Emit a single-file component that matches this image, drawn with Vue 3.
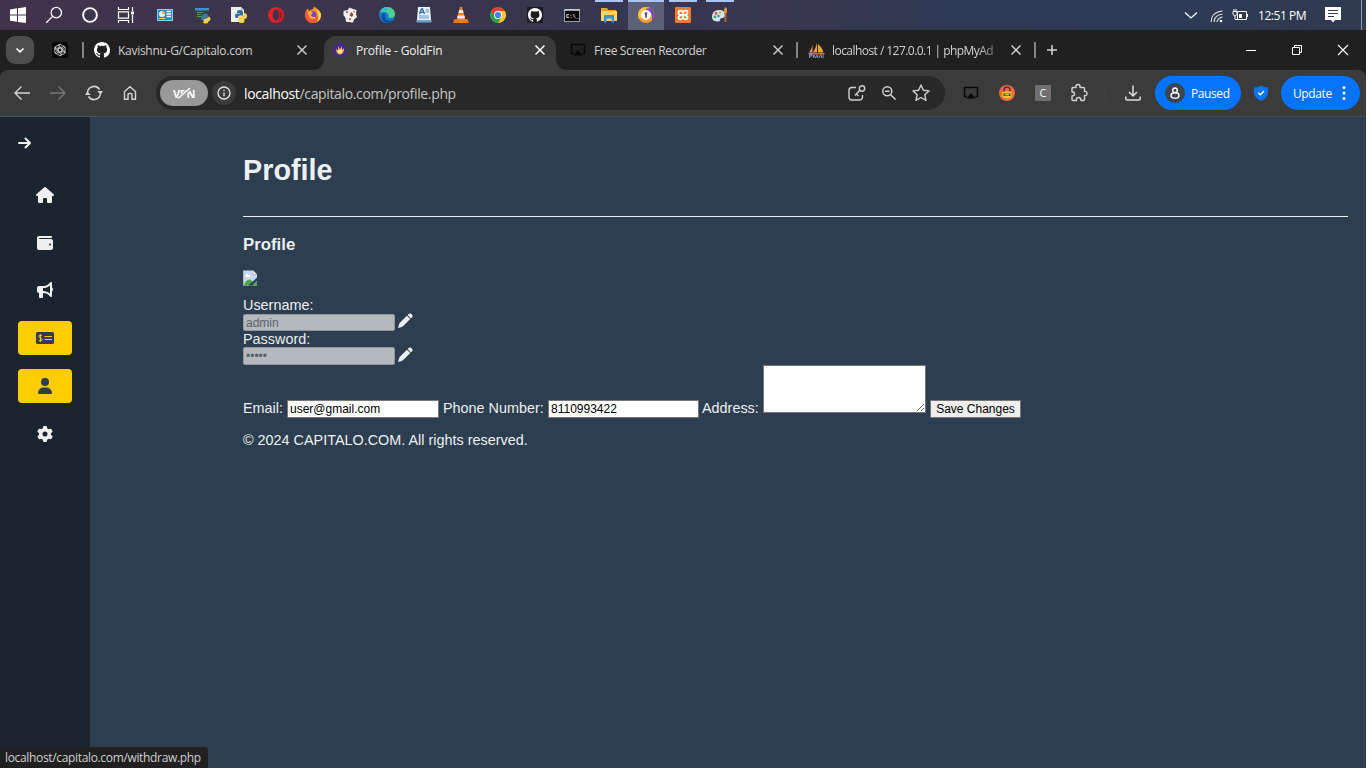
<script setup>
import { ref } from 'vue'

const email = ref('user@gmail.com')
const phone = ref('8110993422')
const username = ref('admin')
const password = ref('•••••')
const address = ref('')

const octocat = 'M8 0C3.58 0 0 3.58 0 8c0 3.54 2.29 6.53 5.47 7.59.4.07.55-.17.55-.38 0-.19-.01-.82-.01-1.49-2.01.37-2.53-.49-2.69-.94-.09-.23-.48-.94-.82-1.13-.28-.15-.68-.52-.01-.53.63-.01 1.08.58 1.23.82.72 1.21 1.87.87 2.33.66.07-.52.28-.87.51-1.07-1.78-.2-3.64-.89-3.64-3.95 0-.87.31-1.59.82-2.15-.08-.2-.36-1.02.08-2.12 0 0 .67-.21 2.2.82.64-.18 1.32-.27 2-.27s1.36.09 2 .27c1.53-1.04 2.2-.82 2.2-.82.44 1.1.16 1.92.08 2.12.51.56.82 1.27.82 2.15 0 3.07-1.87 3.75-3.65 3.95.29.25.54.73.54 1.48 0 1.07-.01 1.93-.01 2.2 0 .21.15.46.55.38A8.01 8.01 0 0 0 16 8c0-4.42-3.58-8-8-8z'

const nav = [
  { name: 'home', box: '0 0 576 512', w: 18, d: 'M575.8 255.5c0 18-15 32.1-32 32.1h-32l.7 160.2c0 2.7-.2 5.4-.5 8.1V472c0 22.1-17.9 40-40 40H456c-1.1 0-2.2 0-3.3-.1c-1.4 .1-2.8 .1-4.2 .1H416 392c-22.1 0-40-17.9-40-40V448 384c0-17.7-14.3-32-32-32H256c-17.7 0-32 14.3-32 32v64 24c0 22.1-17.9 40-40 40H160 128.1c-1.5 0-3-.1-4.5-.2c-1.2 .1-2.4 .2-3.6 .2H104c-22.1 0-40-17.9-40-40V360c0-.9 0-1.9 .1-2.8V287.6H32c-18 0-32-14-32-32.1c0-9 3-17 10-24L266.4 8c7-7 15-8 22-8s15 2 21 7L564.8 231.5c8 7 12 15 11 24z' },
  { name: 'wallet', box: '0 0 512 512', w: 16, d: 'M64 32C28.7 32 0 60.7 0 96V416c0 35.3 28.7 64 64 64H448c35.3 0 64-28.7 64-64V192c0-35.3-28.7-64-64-64H80c-8.8 0-16-7.2-16-16s7.2-16 16-16H448c17.7 0 32-14.3 32-32s-14.3-32-32-32H64zM416 272a32 32 0 1 1 0 64 32 32 0 1 1 0-64z' },
  { name: 'bullhorn', box: '0 0 512 512', w: 16, d: 'M480 32c0-12.9-7.8-24.6-19.8-29.6s-25.7-2.2-34.9 6.9L381.7 53c-48 48-113.1 75-181 75H192 160 64c-35.3 0-64 28.7-64 64v96c0 35.3 28.7 64 64 64l0 128c0 17.7 14.3 32 32 32h64c17.7 0 32-14.3 32-32V352l8.7 0c67.9 0 133 27 181 75l43.6 43.6c9.2 9.2 22.9 11.9 34.9 6.9s19.8-16.6 19.8-29.6V300.4c18.6-8.8 32-32.5 32-60.4s-13.4-51.6-32-60.4V32zm-64 76.7V240 371.3C357.2 317.8 280.5 288 200.7 288H192V192h8.7c79.8 0 156.5-29.8 215.3-83.3z' },
  { name: 'money-check', active: true },
  { name: 'user', active: true, box: '0 0 448 512', w: 14, d: 'M224 256A128 128 0 1 0 224 0a128 128 0 1 0 0 256zm-45.7 48C79.8 304 0 383.8 0 482.3C0 498.7 13.3 512 29.7 512H418.3c16.4 0 29.7-13.3 29.7-29.7C448 383.8 368.2 304 269.7 304H178.3z' },
  { name: 'gear', box: '0 0 512 512', w: 16, d: 'M495.9 166.6c3.2 8.7 .5 18.4-6.4 24.6l-43.3 39.4c1.1 8.3 1.7 16.8 1.7 25.4s-.6 17.1-1.7 25.4l43.3 39.4c6.9 6.2 9.6 15.9 6.4 24.6c-4.4 11.9-9.7 23.3-15.8 34.3l-4.7 8.1c-6.6 11-14 21.4-22.1 31.2c-5.9 7.2-15.7 9.6-24.5 6.8l-55.7-17.7c-13.4 10.3-28.2 18.9-44 25.4l-12.5 57.1c-2 9.1-9 16.3-18.2 17.8c-13.8 2.3-28 3.5-42.5 3.5s-28.7-1.2-42.5-3.5c-9.2-1.5-16.2-8.7-18.2-17.8l-12.5-57.1c-15.8-6.5-30.6-15.1-44-25.4L83.1 425.9c-8.8 2.8-18.6 .3-24.5-6.8c-8.1-9.8-15.5-20.2-22.1-31.2l-4.7-8.1c-6.1-11-11.4-22.4-15.8-34.3c-3.2-8.7-.5-18.4 6.4-24.6l43.3-39.4C64.6 273.1 64 264.6 64 256s.6-17.1 1.7-25.4L22.4 191.2c-6.9-6.2-9.6-15.9-6.4-24.6c4.4-11.9 9.7-23.3 15.8-34.3l4.7-8.1c6.6-11 14-21.4 22.1-31.2c5.9-7.2 15.7-9.6 24.5-6.8l55.7 17.7c13.4-10.3 28.2-18.9 44-25.4l12.5-57.1c2-9.1 9-16.3 18.2-17.8C227.3 1.2 241.5 0 256 0s28.7 1.2 42.5 3.5c9.2 1.5 16.2 8.7 18.2 17.8l12.5 57.1c15.8 6.5 30.6 15.1 44 25.4l55.7-17.7c8.8-2.8 18.6-.3 24.5 6.8c8.1 9.8 15.5 20.2 22.1 31.2l4.7 8.1c6.1 11 11.4 22.4 15.8 34.3zM256 336a80 80 0 1 0 0-160 80 80 0 1 0 0 160z' },
]
</script>

<template>
  <div class="screen">
    <header class="taskbar">
      <div class="sys-icons">
        <span class="slot">
          <svg width="18" height="18" viewBox="0 0 18 18" fill="#fff"><path d="M1 3.4 8 2.3V8.5H1zM9 2.2 17 1V8.5H9zM1 9.5H8V15.8L1 14.7zM9 9.5H17V17L9 15.9z" /></svg>
        </span>
        <span class="slot">
          <svg width="18" height="18" viewBox="0 0 18 18" fill="none" stroke="#fff" stroke-width="1.3"><circle cx="11.3" cy="6.6" r="5.2" /><path d="M7.6 10.4 1.2 16.7" /></svg>
        </span>
        <span class="slot">
          <svg width="18" height="18" viewBox="0 0 18 18" fill="none" stroke="#fff" stroke-width="1.9"><circle cx="9" cy="9" r="6.9" /></svg>
        </span>
        <span class="slot">
          <svg width="18" height="18" viewBox="0 0 18 18" fill="none" stroke="#fff" stroke-width="1.2"><path d="M1.5 1V3.5H11.5V1M1.5 17V14.5H11.5V17M1.5 5.8H11.5V12.2H1.5zM15.5 1V5M15.5 9V17" /><path d="M14 5.5H17V8.5H14z" fill="#fff" stroke="none" /></svg>
        </span>
      </div>
      <div class="apps">
        <span class="app">
          <svg width="18" height="18" viewBox="0 0 18 18"><rect x="1" y="3" width="16" height="12" fill="#7fd0f6" /><rect x="2" y="4" width="14" height="10" fill="#2b86c9" /><circle cx="6" cy="8" r="3" fill="#e8f4fc" /><path d="M6 8V5a3 3 0 0 1 3 3z" fill="#f3b23c" /><path d="M10.500 5.500H15M10.500 8H15M10.500 10.500H15" stroke="#fff" stroke-width="1.4" /><path d="M3 12.500H9" stroke="#f5d27a" /></svg>
        </span>
        <span class="app">
          <svg width="18" height="18" viewBox="0 0 18 18"><rect x="2" y="2" width="14" height="12" fill="#33413f" /><rect x="2" y="2" width="14" height="2.500" fill="#3b93d0" /><path d="M4 6.500H10M4 8.500H8M4 10.500H9" stroke="#4c9a55" /><path d="M9 10Q9 7.500 12 7.500T15 10V12H12Q10 12 10 14.500 8 14 8 12T10 10.500z" fill="#397aaf" /><path d="M15.500 10.500Q17.500 10.500 17.500 13T15.500 15V16Q15 17.500 12.500 17.500T10.500 16V13.500Q11 12.500 13 12.500 15.500 12.500 15.500 10.500z" fill="#f4cf4a" /></svg>
        </span>
        <span class="app">
          <svg width="18" height="18" viewBox="0 0 18 18"><path d="M1 1H11L14 4V16H1z" fill="#eceff2" /><path d="M11 1V4H14z" fill="#b7bcc4" /><path d="M7 6Q7 4 10 4T13 6V9.500H9.500Q8 9.500 8 12H6.500Q5 12 5 9.500T7.500 7.500H10V7H7z" fill="#366c9c" /><path d="M14 7Q17 7 17 10T14.500 13H11.500V13.500H14.500V15Q14.500 17 11.500 17T8.500 15V12.500Q8.500 10.500 10.500 10.500 14 10.500 14 7z" fill="#f8d044" /></svg>
        </span>
        <span class="app">
          <svg width="18" height="18" viewBox="0 0 18 18"><path fill-rule="evenodd" d="M9 1a8 8 0 1 0 0 16A8 8 0 0 0 9 1zm0 2.500c2 0 3.200 2.200 3.200 5.500S11 14.500 9 14.500 5.800 12.300 5.800 9 7 3.500 9 3.500z" fill="#e3202c" /><path d="M11 2.500a7 7 0 0 1 0 13C13.500 13 13.500 5 11 2.500z" fill="#b5101f" /></svg>
        </span>
        <span class="app">
          <svg width="18" height="18" viewBox="0 0 18 18"><path d="M9 17a8 8 0 0 1-8-8Q1 5 3.500 2.500L5 5Q7 3 9 3.200 9 1.500 11 .6q1 2.400 3.500 3.800Q17 6.500 17 9a8 8 0 0 1-8 8z" fill="#ff9125" /><path d="M9 17a8 8 0 0 1-8-8Q1 6 2.500 4 4 9 8 10q5 1.500 9-1a8 8 0 0 1-8 8z" fill="#f65a3f" /><path d="M12 2Q17 5.500 17 9A8 8 0 0 1 13 16Q16 10 12 2z" fill="#ffd43c" /><circle cx="9" cy="8.800" r="3.600" fill="#7645c9" /><path d="M4 6q3-1 5 1-2 .7-2 2.500 2 2.500 5 1-1 3-4 2.500Q4.500 12 4 6z" fill="#ffad3c" /></svg>
        </span>
        <span class="app">
          <svg width="18" height="18" viewBox="0 0 18 18"><path d="m2.500 5 4-1 2-2.500L12 3l3.500 1-.5 4 1 3-3 2.500-1 3-7-.7-.5-3.800-2-3z" fill="#f2f1ee" /><path d="m10.500 6-2 3.200L11 11l1.400-2.500z" fill="#8b3c42" /><circle cx="6" cy="6" r="1" fill="#c93a3a" /><circle cx="9" cy="13" r="1" fill="#c93a3a" /><circle cx="13" cy="5.800" r=".8" fill="#c93a3a" /></svg>
        </span>
        <span class="app">
          <svg width="18" height="18" viewBox="0 0 18 18"><circle cx="9" cy="9" r="8" fill="#1479cf" /><path d="M1.500 7C3 2.500 6 1 9 1c5 0 8 3.500 8 7 0 3-2.500 4-4.500 4S10 11.200 10.500 10q0-3.500-3.500-4-4-.5-5.500 1z" fill="#4fd08e" /><path d="M1.500 7Q4 1.500 9 1l1 3Q5 3.500 1.500 7z" fill="#36b6dc" /><path d="M7.200 8q-1.500 4 2 6 3 1.500 6-.5-3 4.500-8 3Q2 14 4 9q1-2 3.200-1z" fill="#0c4f9e" /></svg>
        </span>
        <span class="app">
          <svg width="18" height="18" viewBox="0 0 18 18"><path d="M3 1H15L16 14H2z" fill="#edf5fb" /><path d="M1.500 14H16.500V16.500H1.500z" fill="#6fa6cf" /><path d="m4.500 8 2-5h1l2 5M5.300 6.400H8.700" fill="none" stroke="#1e68b7" stroke-width="1.300" /><path d="M10.500 4H14M10.500 6H14M4 10H14M4 12H14" stroke="#5a95c4" /></svg>
        </span>
        <span class="app">
          <svg width="18" height="18" viewBox="0 0 18 18"><path d="M2.500 13H15.500L17 17H1z" fill="#e9740d" /><path d="M8 1H10L13.500 14Q9 16.500 4.500 14z" fill="#f3811b" /><path d="M7.200 4H10.800L11.500 7H6.500zM5.700 9.500H12.300L13 12Q9 13.500 5 12z" fill="#f0eeeb" /></svg>
        </span>
        <span class="app">
          <svg width="18" height="18" viewBox="0 0 18 18"><path d="M2.070 5A8 8 0 0 1 15.930 5H9z" fill="#e8422f" /><path d="M2.070 5A8 8 0 0 0 9 17L12.500 11 9 9z" fill="#2fa04c" /><path d="M15.930 5A8 8 0 0 1 9 17L12.500 11Q13 7 9 5z" fill="#fccb1b" /><path d="M2.070 5 5.700 11 8 5z" fill="#e8422f" /><circle cx="9" cy="9" r="4" fill="#fff" /><circle cx="9" cy="9" r="3.100" fill="#3f83ee" /></svg>
        </span>
        <span class="app">
          <svg width="18" height="18" viewBox="0 0 18 18"><rect x="1" y="1" width="16" height="16" fill="#1b1b20" /><path :d="octocat" fill="#fff" transform="translate(2 2) scale(.875)" /></svg>
        </span>
        <span class="app">
          <svg width="18" height="18" viewBox="0 0 18 18"><rect x="1.500" y="3.500" width="15" height="12" fill="#050505" stroke="#9c9ca4" /><path d="M1.500 4H16.500" stroke="#d7d7da" stroke-width="1.500" /><text x="3" y="12" class="cmd">C:\_</text></svg>
        </span>
        <span class="app open">
          <svg width="18" height="18" viewBox="0 0 18 18"><path d="M1 2H7L8.500 4H16V7H1z" fill="#e3a72c" /><path d="M1 5H17V15H1z" fill="#fbd565" /><path d="M4 9H14V16.500H11.500V12.500H6.500V16.500H4z" fill="#3b92d5" /></svg>
        </span>
        <span class="app open current">
          <svg width="18" height="18" viewBox="0 0 18 18"><circle cx="9" cy="9" r="8" fill="#ff9b25" /><path d="M9 1a8 8 0 0 1 8 8q0 3-2 5Q16 5 9 4z" fill="#7643d8" /><path d="M1 9a8 8 0 0 1 8-8q3 0 4 1Q4 2 4.500 12L2 13z" fill="#ffc23b" /><circle cx="9" cy="9" r="5" fill="#fff" /><path d="M9 6a1.500 1.500 0 0 1 1 2.500L9.700 12H8.300L8 8.500A1.500 1.500 0 0 1 9 6z" fill="#68458b" /></svg>
        </span>
        <span class="app open">
          <svg width="18" height="18" viewBox="0 0 18 18"><rect x="1" y="1" width="16" height="16" rx="1" fill="#f47b28" /><path d="M9 9C7 9 4.500 8.800 4.500 6.500S8 4 9 6.500C10 4 13.500 4.200 13.500 6.500S11 9 9 9zM9 9C7 9 4.500 9.200 4.500 11.500S8 14 9 11.500C10 14 13.500 13.800 13.500 11.500S11 9 9 9z" fill="none" stroke="#fff" stroke-width="1.800" /></svg>
        </span>
        <span class="app open">
          <svg width="18" height="18" viewBox="0 0 18 18"><path d="M1 11Q1 4 8 4q6 0 6 5 0 3-3 3-2 0-2 2 0 1.500-2 1.500-6 0-6-4.500z" fill="#cfe6f4" /><circle cx="5" cy="7.500" r="1.400" fill="#e25345" /><circle cx="9" cy="6.500" r="1.300" fill="#f0b428" /><circle cx="4" cy="11" r="1.400" fill="#3eaa5d" /><circle cx="7.500" cy="10" r="1.200" fill="#3380cb" /><path d="M14.500 1 16 3V7H13V3z" fill="#e08f3c" /><path d="M14.500 7V16" stroke="#b5672b" stroke-width="1.800" /></svg>
        </span>
      </div>
      <div class="tray">
        <svg class="chev" width="14" height="14" viewBox="0 0 14 14" fill="none" stroke="#fff" stroke-width="1.200"><path d="m1 4.500 6 5.500 6-5.500" /></svg>
        <svg class="wifi" width="14" height="14" viewBox="0 0 14 14" fill="none" stroke="#e8e8ee" stroke-width="1.100"><path d="M1 13Q1.500 3 12.500 2M4 13Q4.500 6 12.500 5M7 13Q7.500 9 12.500 8" /><circle cx="11" cy="12" r="1.300" fill="#fff" stroke="none" /></svg>
        <svg class="battery" width="16" height="14" viewBox="0 0 16 14" fill="none" stroke="#fff"><path d="M5.500 3.500H14.500V11.500H5.500zM15.500 6V9M1 3.500H5V6.500L3 8 1 6.500zM2 1V3M4 1V3M3 8V11.500H6" /><path d="M7 6H10V10H7z" fill="#fff" stroke="none" /></svg>
        <span class="clock">12:51 PM</span>
        <svg class="notice" width="18" height="18" viewBox="0 0 18 18"><path d="M1 1H17V14H11L9 16.500 7 14H1z" fill="#fff" /><path d="M4 4.500H14M4 7.500H14M4 10.500H10" stroke="#303950" stroke-width="1.200" /></svg>
        <i class="peek"></i>
      </div>
    </header>

    <section class="tabs">
      <button class="tab-search"><svg width="12" height="12" viewBox="0 0 12 12" fill="none" stroke="#fff" stroke-width="1.700"><path d="m2.500 4.500 3.500 3.300 3.500-3.300" /></svg></button>
      <div class="pinned">
        <svg width="16" height="16" viewBox="0 0 16 16"><rect width="16" height="16" rx="2" fill="#090909" /><g fill="none" stroke="#ddd" stroke-width=".8"><path v-for="a in [0, 60, 120, 180, 240, 300]" :key="a" :transform="`rotate(${a} 8 8)`" d="M8 5.700 10 6.900V10.500L7.500 12M6 3.200Q8.500 1 10.700 4L13 5.500" /></g></svg>
      </div>
      <i class="bar"></i>
      <div class="tab tab-git">
        <svg class="fav" width="16" height="16" viewBox="0 0 16 16" fill="#fff"><path :d="octocat" /></svg>
        <span class="t1">Kavishnu-G/Capitalo.com</span>
        <svg class="close" width="12" height="12" viewBox="0 0 12 12" stroke="#d6d6d6" stroke-width="1.400"><path d="m1.500 1.500 9 9m0-9-9 9" /></svg>
      </div>
      <div class="tab tab-active">
        <svg class="fav" width="16" height="16" viewBox="0 0 16 16"><circle cx="8" cy="8" r="7" fill="#41298e" /><path d="M4 6Q5 9 6 8L6.500 4 8 7.500 10 4V8L12 6Q12 12 8 12.500 4 12 4 6z" fill="#ffb852" /><path d="M6 8h4v3H6z" fill="#ffe485" /></svg>
        <span class="t2">Profile - GoldFin</span>
        <svg class="close" width="12" height="12" viewBox="0 0 12 12" stroke="#fff" stroke-width="1.500"><path d="m1.500 1.500 9 9m0-9-9 9" /></svg>
      </div>
      <div class="tab tab-rec">
        <svg class="fav" width="16" height="14" viewBox="0 0 16 14"><path d="M4 10.500H1.500V1.500H14.500V10.500H12" fill="none" stroke="#070707" stroke-width="1.500" /><path d="m8 7 4.500 5.500h-9z" fill="#050505" /></svg>
        <span class="t3">Free Screen Recorder</span>
        <svg class="close" width="12" height="12" viewBox="0 0 12 12" stroke="#d6d6d6" stroke-width="1.400"><path d="m1.500 1.500 9 9m0-9-9 9" /></svg>
      </div>
      <i class="bar"></i>
      <div class="tab tab-pma">
        <svg class="fav" width="17" height="16" viewBox="0 0 17 16"><path d="M1 10.500Q4 7 4.500 2.500V10.500zM5 10.500Q8 6 9 .5V10.500zM10 10.500V2Q14 5 15.500 10.500z" fill="#f3a02f" /><path d="M0 11H17L16 12.500H1z" fill="#c7793b" /><path d="M1.500 16V12.500H4V14H2M5 16l1-3 1.500 3 1.500-3 1 3M11 16l1.500-3.500L14 16M15 12.500V16" fill="none" stroke="#9aa1d6" stroke-width=".9" /></svg>
        <span class="t4">localhost / 127.0.0.1 | phpMyAd</span>
        <svg class="close" width="12" height="12" viewBox="0 0 12 12" stroke="#d6d6d6" stroke-width="1.400"><path d="m1.500 1.500 9 9m0-9-9 9" /></svg>
      </div>
      <i class="bar"></i>
      <svg class="plus" width="12" height="12" viewBox="0 0 12 12" stroke="#d6d6d6" stroke-width="1.500"><path d="M6 1V11M1 6H11" /></svg>
      <div class="win">
        <svg width="12" height="12" viewBox="0 0 12 12" stroke="#fff"><path d="M1 6.500H11" /></svg>
        <svg width="12" height="12" viewBox="0 0 12 12" fill="none" stroke="#fff"><path d="M1.500 3.500H8.500V10.500H1.500zM3.500 3.500V1.500H10.500V8.500H8.500" /></svg>
        <svg width="12" height="12" viewBox="0 0 12 12" stroke="#fff" stroke-width="1.100"><path d="m1 1 10 10m0-10L1 11" /></svg>
      </div>
    </section>

    <section class="toolbar">
      <div class="navs">
        <svg width="18" height="18" viewBox="0 0 18 18" fill="none" stroke="#d4d4d4" stroke-width="1.400"><path d="M17 9H2M8.500 2.500 2 9l6.500 6.500" /></svg>
        <svg width="18" height="18" viewBox="0 0 18 18" fill="none" stroke="#777" stroke-width="1.400"><path d="M1 9H16M9.500 2.500 16 9l-6.500 6.500" /></svg>
        <svg width="18" height="18" viewBox="0 0 18 18" fill="none" stroke="#d4d4d4" stroke-width="1.500"><path d="M2.500 9A6.500 6.500 0 0 1 14.500 5.500M15.500 9A6.500 6.500 0 0 1 3.500 12.500" /><path d="M12.300 7H18L15.500 10.500zM5.700 11H0L2.500 7.500z" fill="#d4d4d4" stroke="none" /></svg>
        <svg width="18" height="18" viewBox="0 0 18 18" fill="none" stroke="#d4d4d4" stroke-width="1.400"><path d="M3.500 7.500 9 2.700l5.500 4.800V15.300H11V10.500Q11 9.500 10 9.500H8Q7 9.500 7 10.500V15.300H3.500z" /></svg>
      </div>
      <div class="omni">
        <span class="vpn">VPN<svg width="30" height="16" viewBox="0 0 30 16"><path d="M9.500 13.500 21.500 3" stroke="#999" stroke-width="3.200" /><path d="M9 13.500 21 3" stroke="#fff" stroke-width="1.500" /></svg></span>
        <span class="info"><svg width="14" height="14" viewBox="0 0 14 14" fill="none" stroke="#e6e6e6" stroke-width="1.300"><circle cx="7" cy="7" r="6" /><path d="M7 6.300V10.300M7 3.700V5" /></svg></span>
        <span class="url"><b>localhost</b>/capitalo.com/profile.php</span>
        <div class="omni-icons">
          <svg width="20" height="18" viewBox="0 0 20 18" fill="none" stroke="#d0d0d0" stroke-width="1.400"><path d="M9 3.500H5Q2 3.500 2 6.500V13Q2 16 5 16H12Q15.500 16 15.500 13V11" /><circle cx="15" cy="4.500" r="2.700" /><path d="M12.800 6.200 8 11.500M9.500 10l2 2" /></svg>
          <svg width="16" height="16" viewBox="0 0 16 16" fill="none" stroke="#d0d0d0" stroke-width="1.500"><circle cx="6.300" cy="6.300" r="4.500" /><path d="M4 6.300H8.600M9.700 9.700 14.500 14.500" /></svg>
          <svg width="20" height="20" viewBox="0 0 20 20" fill="none" stroke="#d0d0d0" stroke-width="1.400" stroke-linejoin="round"><path d="m10 2 2.400 5.300 5.600.6-4.200 3.800 1.200 5.600L10 14.500 5 17.300l1.200-5.600L2 7.900l5.600-.6z" /></svg>
        </div>
      </div>
      <div class="exts">
        <svg width="16" height="14" viewBox="0 0 16 14"><path d="M4 10.500H1.500V1.500H14.500V10.500H12" fill="none" stroke="#080808" stroke-width="1.500" /><path d="m8 7 4.500 5.500h-9z" fill="#050505" /></svg>
        <svg width="16" height="16" viewBox="0 0 16 16"><circle cx="8" cy="8" r="8" fill="#f4693e" /><path d="M5 7V5a3 3 0 0 1 6 0v2" fill="none" stroke="#5b3328" stroke-width="1.600" /><path d="M3.500 6.500H12.500V11Q12 13.500 8 13.500T3.500 11z" fill="#f3c434" /><path d="M4.500 8.500H11.500V11H4.500z" fill="#38566d" /><path d="M6 9.700H10" stroke="#f3c434" stroke-width="1.200" /></svg>
        <span class="c-ext">C</span>
        <svg width="20" height="20" viewBox="0 0 20 20" fill="none" stroke="#d4d4d4" stroke-width="1.400" stroke-linejoin="round"><path d="M3 5.500Q3 4.500 4 4.500H7Q6.500 1.500 9 1.500T11 4.500H14.500Q15.500 4.500 15.500 5.500V8.500Q18 8 18 10.500T15.500 12.500V16.500Q15.500 17.500 14.500 17.500H12Q12 14.500 9.500 14.500T7.500 17.500H4Q3 17.500 3 16.500V13Q5.500 13 5.500 11T3 8.800z" /></svg>
      </div>
      <i class="sep"></i>
      <svg class="dl" width="18" height="18" viewBox="0 0 18 18" fill="none" stroke="#e0e0e0" stroke-width="1.500"><path d="M9 1.500V12M5 8l4 4 4-4M1.800 12.500V14.500Q1.800 16 3.300 16H14.700Q16.200 16 16.200 14.500V12.500" /></svg>
      <div class="paused"><span class="who"><svg width="12" height="14" viewBox="0 0 12 14" fill="none" stroke="#fff" stroke-width="1.400"><circle cx="6" cy="4.300" r="2.300" /><ellipse cx="6" cy="9.400" rx="4" ry="2.700" /></svg></span>Paused</div>
      <svg class="shield" width="14" height="16" viewBox="0 0 14 16"><path d="M7 .5Q10 2.500 14 2.500V8Q13.500 13 7 16 .5 13 0 8V2.500Q4 2.500 7 .5z" fill="#0b74f7" /><path d="m4.300 7.700 2 2L10 6" fill="none" stroke="#fff" stroke-width="1.400" /></svg>
      <div class="update">Update<svg width="4" height="16" viewBox="0 0 4 16" fill="#fff"><circle cx="2" cy="2.500" r="1.500" /><circle cx="2" cy="8" r="1.500" /><circle cx="2" cy="13.500" r="1.500" /></svg></div>
    </section>

    <div class="page">
      <aside class="sidebar">
        <svg class="arrow" width="14" height="14" viewBox="0 0 14 14" fill="none" stroke="#ecf0f1" stroke-width="2" stroke-linecap="round" stroke-linejoin="round"><path d="M1 7H12M7.500 2.500 12 7 7.500 11.500" /></svg>
        <nav>
          <a v-for="n in nav" :key="n.name" :class="[n.name, { on: n.active }]">
            <svg v-if="n.d" :width="n.w" height="16" :viewBox="n.box"><path :d="n.d" fill="currentColor" /></svg>
            <svg v-else width="18" height="12" viewBox="0 0 18 12"><rect width="18" height="12" rx="1.500" fill="currentColor" /><path d="M8.500 4.500H16M8.500 7.500H16M6 4Q5.500 3 4.300 3T2.800 4.300Q2.800 5.400 4.400 5.800T6 7.600Q6 9 4.400 9T2.600 8M4.400 2V10" fill="none" stroke="#ffcc00" stroke-width="1" /></svg>
          </a>
        </nav>
      </aside>
      <main>
        <h1>Profile</h1>
        <h3>Profile</h3>
        <svg class="broken" width="14" height="16" viewBox="0 0 14 16"><path d="M0 .5H10L14 4.500V15.500H0z" fill="#c5d7f3" /><path d="M0 .5V15.500" stroke="#8c969f" /><path d="M10 .5V4.500H14z" fill="#fff" stroke="#98a0a8" stroke-width=".6" /><circle cx="4" cy="5.500" r="1.500" fill="#fff" /><path d="M3 5H7V7H2.500z" fill="#fff" /><path d="M1 15Q3 9.500 7 9.500 8 10 10 12V15z" fill="#49a83c" /><path d="M10 15.500 14 11.500V15.500z" fill="#49a83c" /><path d="M5.500 15.500 14 7.500V11L9.500 15.500z" fill="#2d3e50" /></svg>
        <div class="field">
          <label>Username:</label>
          <div class="line"><input v-model="username" class="locked" disabled /><svg class="pen" width="15" height="15" viewBox="0 0 15 15" fill="#ecf0f1"><path d="M11 .8Q12 0 13 .8L14.300 2Q15 3 14.300 4L12.900 5.400 9.600 2.100zM8.900 2.800 12.200 6.100 5 13.300Q4.500 13.800 0 15 1.200 10.500 1.700 10z" /></svg></div>
        </div>
        <div class="field">
          <label>Password:</label>
          <div class="line"><input v-model="password" class="locked tall" disabled /><svg class="pen" width="15" height="15" viewBox="0 0 15 15" fill="#ecf0f1"><path d="M11 .8Q12 0 13 .8L14.300 2Q15 3 14.300 4L12.900 5.400 9.600 2.100zM8.900 2.800 12.200 6.100 5 13.300Q4.500 13.800 0 15 1.200 10.500 1.700 10z" /></svg></div>
        </div>
        <form>
          <label class="l-email">Email:</label><input v-model="email" class="i-email" />
          <label class="l-phone">Phone Number:</label><input v-model="phone" class="i-phone" />
          <label class="l-addr">Address:</label><textarea v-model="address"></textarea>
          <button type="button">Save Changes</button>
        </form>
        <footer>© 2024 CAPITALO.COM. All rights reserved.</footer>
      </main>
      <div class="status">localhost/capitalo.com/withdraw.php</div>
    </div>
  </div>
</template>

<style>
html, body { margin: 0; background: #fff; overflow: hidden; }
</style>

<style scoped>
* { box-sizing: border-box; }
svg { display: block; flex: none; }
.screen { width: 1366px; height: 768px; display: flex; flex-direction: column; overflow: hidden; font-family: "Open Sans", "Noto Sans", sans-serif; font-size: 12px; background: #202020; }

.taskbar { height: 30px; flex: none; display: flex; background: linear-gradient(90deg, #3f344b 0, #3b354c 28%, #353652 48%, #3a3650 57%, #2d3852 69%, #2d3a55 86%, #303a50 100%); }
.sys-icons, .apps { display: flex; }
.slot { width: 36px; display: grid; place-items: center; }
.apps { margin-left: 2.500px; }
.app { width: 37px; display: grid; place-items: center; }
.app.open { background: linear-gradient(#a9c4f5, #a9c4f5) center top / 28px 2px no-repeat; }
.app.open.current { background: linear-gradient(#a9c4f5, #a9c4f5) center top / 36px 2px no-repeat, linear-gradient(#5c5f78, #5c5f78) center / 36px 100% no-repeat; }
.cmd { font: bold 5.500px "Liberation Mono", monospace; fill: #fff; }
.tray { margin-left: auto; display: flex; align-items: center; height: 30px; color: #fff; }
.chev { margin-right: 1px; }
.wifi { margin-left: 11px; margin-top: 2px; }
.battery { margin-left: 8px; }
.clock { margin-left: 10px; width: 50px; white-space: nowrap; font-size: 12px; letter-spacing: -.45px; }
.notice { margin-left: 16px; }
.peek { width: 1px; height: 30px; background: #9197a5; margin-left: 19px; margin-right: 4px; }

.tabs { height: 40px; flex: none; display: flex; align-items: center; background: #202020; color: #d0d0d0; }
.tab-search { width: 28px; height: 28px; margin-left: 6px; border: 0; border-radius: 9px; background: #4d4d4d; padding: 0; display: grid; place-items: center; }
.pinned { margin-left: 18px; width: 30px; }
.bar { width: 2px; height: 16px; background: #858585; flex: none; }
.tab { display: flex; align-items: center; white-space: nowrap; }
.tab .close { margin-left: auto; }
.tab-git { width: 230px; margin-left: 10px; }
.tab-git .fav { margin-right: 8px; }
.tab-git .close { margin-right: 16px; }
.tab-active { width: 232px; align-self: flex-end; height: 34px; padding: 0 10px 6px 8px; background: #3b3b3b; border-radius: 12px 12px 0 0; color: #f2f2f2; position: relative; }
.tab-active::before, .tab-active::after { content: ""; position: absolute; bottom: 0; width: 10px; height: 10px; }
.tab-active::before { left: -10px; background: radial-gradient(circle at 0 0, transparent 9.500px, #3b3b3b 10px); }
.tab-active::after { right: -10px; background: radial-gradient(circle at 100% 0, transparent 9.500px, #3b3b3b 10px); }
.tab-active .fav { margin-right: 8px; }
.tab-rec { width: 240px; padding-left: 14px; }
.tab-rec .fav { margin-right: 8px; }
.tab-rec .close { margin-right: 12px; }
.tab-pma { width: 236px; padding-left: 10px; }
.tab-pma .fav { margin-right: 7px; }
.tab-pma .close { margin-right: 12px; }
.t1 { letter-spacing: -.28px; }
.t2 { letter-spacing: -.16px; }
.t3 { letter-spacing: -.38px; }
.t4 { width: 170px; letter-spacing: -.55px; -webkit-mask-image: linear-gradient(90deg, #000 86%, #0003 99%); mask-image: linear-gradient(90deg, #000 86%, #0003 99%); }
.plus { margin-left: 10px; }
.win { margin-left: auto; display: flex; gap: 34px; margin-right: 17px; }

.toolbar { height: 47px; flex: none; display: flex; align-items: center; background: #3b3b3b; border-bottom: 1px solid #46525a; border-radius: 8px 8px 0 0; color: #fff; }
.navs { display: flex; gap: 18px; margin-left: 13px; }
.omni { margin-left: 17px; width: 789px; height: 34px; border-radius: 17px; background: #282828; display: flex; align-items: center; padding: 0 14px 0 4px; }
.vpn { width: 48px; height: 26px; border-radius: 13px; background: #999; display: grid; place-items: center; font-weight: 700; font-size: 11px; letter-spacing: -.3px; position: relative; }
.vpn svg { position: absolute; left: 9px; top: 5px; }
.info { margin-left: 4px; width: 24px; height: 24px; border-radius: 50%; background: #3b3b3b; display: grid; place-items: center; }
.url { margin-left: 8px; font-size: 14px; letter-spacing: -.35px; color: #c4c4c4; white-space: nowrap; }
.url b { font-weight: 400; color: #fff; }
.omni-icons { margin-left: auto; display: flex; align-items: center; gap: 14px; }
.exts { margin-left: 18px; display: flex; align-items: center; gap: 20px; }
.c-ext { width: 16px; height: 16px; background: #707070; border-radius: 1px; display: grid; place-items: center; font-size: 11px; line-height: 16px; }
.exts svg:last-child { margin-left: -2px; }
.sep { width: 1px; height: 16px; background: #444; margin-left: 16px; }
.dl { margin-left: 18px; }
.paused { margin-left: 13px; width: 86px; height: 34px; border-radius: 17px; background: #0573fb; display: flex; align-items: center; padding-left: 10px; letter-spacing: -.4px; }
.who { width: 20px; height: 20px; margin-right: 6px; border-radius: 50%; background: #3d4450; display: grid; place-items: center; }
.shield { margin-left: 13px; }
.update { margin-left: 13px; width: 79px; height: 34px; border-radius: 17px; background: #0573fb; display: flex; align-items: center; justify-content: space-between; padding: 0 14px 0 12px; letter-spacing: -.4px; }

.page { flex: 1; display: flex; background: #2d3e50; position: relative; font-family: "Liberation Sans", Arial, sans-serif; color: #ecf0f1; }
.sidebar { width: 90px; background: #1b252f; }
.arrow { margin: 19px 0 0 17.500px; }
.sidebar nav { display: flex; flex-direction: column; gap: 13.800px; margin: 28px 18px 0; }
.sidebar a { height: 34px; border-radius: 4px; display: grid; place-items: center; color: #ecf0f1; }
.sidebar a.on { background: #ffcc00; color: #2d3e50; }
.sidebar a.bullhorn { padding-bottom: 2px; }
main { flex: 1; margin: 0 18px 0 153px; font-size: 14.400px; line-height: 17px; }
h1 { margin: 0; padding: 34px 0 27px; font-size: 28.800px; line-height: 38px; border-bottom: 1px solid #ecf0f1; }
h3 { margin: 0; padding-top: 18px; font-size: 16.800px; line-height: 19px; }
.broken { margin-top: 16px; }
.field { height: 34px; }
.broken + .field { margin-top: 11px; }
.field label { display: block; height: 16px; }
.line { display: flex; height: 18px; align-items: flex-start; }
input { width: 152px; height: 18px; border: 1px solid #767676; background: #fff; color: #000; padding: 0 2px; font: 12px/15px "Liberation Sans", Arial, sans-serif; border-radius: 0; }
.locked { height: 17px; margin-top: 1px; background: #b4b9be; border-color: #8f969c; color: #5b6167; border-radius: 2px; }
.locked.tall { height: 18px; margin-top: 0; }
.pen { margin-left: 3px; }
form { display: flex; height: 53px; align-items: flex-end; white-space: nowrap; }
form label { margin-bottom: 1px; }
.l-email { width: 44px; }
.l-phone { width: 105px; margin-left: 4px; }
.i-phone { width: 151px; }
.l-addr { width: 61px; margin-left: 3px; }
textarea { width: 163px; height: 48px; margin-bottom: 5px; border: 1px solid #767676; padding: 2px; background: #fff; resize: both; }
form button { width: 91px; height: 18px; margin-left: 4px; padding: 0; border: 1px solid #767676; background: #efefef; color: #000; font: 12px/15px "Liberation Sans", Arial, sans-serif; }
footer { margin-top: 14px; }
.status { position: absolute; left: 0; bottom: 0; width: 208px; height: 21px; background: #202020; color: #cfcfcf; border-top-right-radius: 3px; padding-left: 5px; font: 12px/21px "Open Sans", "Noto Sans", sans-serif; letter-spacing: -.34px; white-space: nowrap; }
</style>
